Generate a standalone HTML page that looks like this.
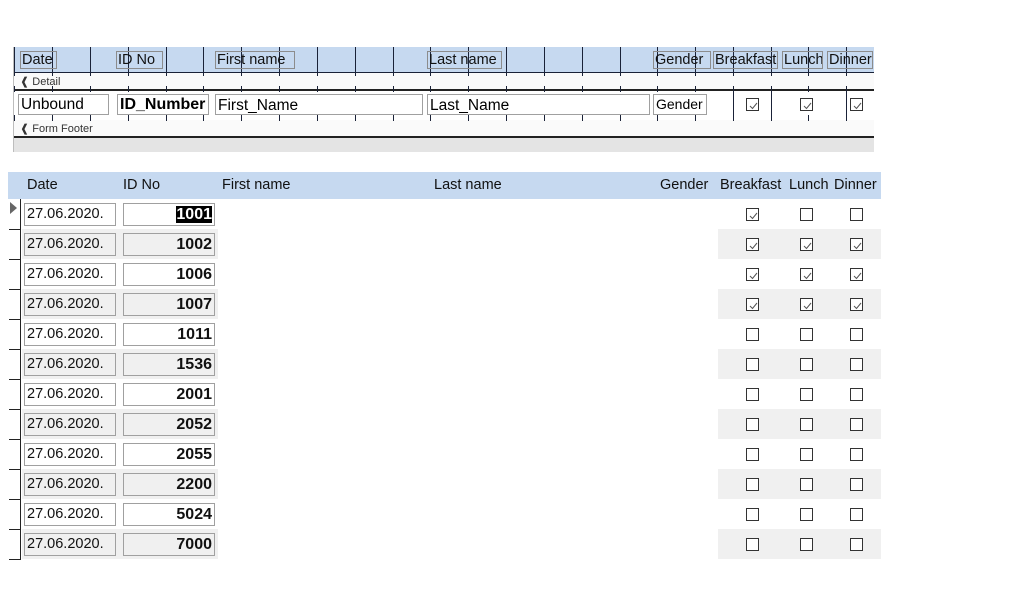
<!DOCTYPE html>
<html><head><meta charset="utf-8"><style>
body{margin:0;width:1016px;height:600px;background:#fff;position:relative;overflow:hidden;font-family:"Liberation Sans",Arial,sans-serif}
div{position:absolute;box-sizing:border-box}
.vl{width:1px;background:#1a2238}
.lbl{border:1px solid #8c8c8c;font-size:14.5px;line-height:17px;color:#111;white-space:nowrap;overflow:hidden;padding-left:1px}
.tb{border:1px solid #a0a0a0;background:#fff;font-size:15.5px;line-height:19px;padding-left:2px;white-space:nowrap;overflow:hidden}
.sec{font-size:11px;color:#333;left:20px}
.hd{font-size:14.5px;color:#111;top:177px}
.cb{width:13px;height:13px;border:1px solid #333;background:#fff}
.cb svg{position:absolute;left:1px;top:1px}
.d{left:24px;width:92px;height:23px;border:1px solid #a0a0a0;font-size:14.5px;line-height:20px;padding-left:2px;color:#111}
.n{left:123px;width:92px;height:23px;border:1px solid #a0a0a0;font-size:16px;font-weight:bold;line-height:21px;text-align:right;padding-right:2px;color:#111}
</style></head><body>
<div style="left:13px;top:47px;width:861px;height:105px;border-left:1px solid #bdbdbd;background:#fafafa"></div>
<div style="left:14px;top:47px;width:860px;height:26px;background:#c6d9f0"></div>
<div style="left:14px;top:72px;width:860px;height:1px;background:#1a2238"></div>
<div style="left:14px;top:89px;width:860px;height:2px;background:#222"></div>
<div style="left:14px;top:91px;width:860px;height:29px;background:#fff"></div>
<div style="left:14px;top:136px;width:860px;height:2px;background:#222"></div>
<div style="left:14px;top:138px;width:860px;height:14px;background:#e4e4e4"></div>
<div class="sec" style="top:75px">&#x2770; Detail</div>
<div class="sec" style="top:122px">&#x2770; Form Footer</div>
<div id="grid"></div>
<div class="lbl" style="left:20px;top:51px;width:37px;height:18px">Date</div>
<div class="lbl" style="left:116px;top:51px;width:47px;height:18px">ID No</div>
<div class="lbl" style="left:215px;top:51px;width:80px;height:18px">First name</div>
<div class="lbl" style="left:427px;top:51px;width:75px;height:18px">Last name</div>
<div class="lbl" style="left:653px;top:51px;width:58px;height:18px">Gender</div>
<div class="lbl" style="left:713px;top:51px;width:65px;height:18px">Breakfast</div>
<div class="lbl" style="left:782px;top:51px;width:41px;height:18px">Lunch</div>
<div class="lbl" style="left:827px;top:51px;width:46px;height:18px">Dinner</div>
<div class="tb" style="left:18px;top:94px;width:91px;height:21px">Unbound</div>
<div class="tb" style="left:117px;top:94px;width:92px;height:21px;font-weight:bold;font-size:16px">ID_Number</div>
<div class="tb" style="left:215px;top:94px;width:208px;height:21px;line-height:21px">First_Name</div>
<div class="tb" style="left:427px;top:94px;width:223px;height:21px;line-height:21px">Last_Name</div>
<div class="tb" style="left:653px;top:94px;width:54px;height:21px;font-size:14px">Gender</div>
<div style="left:8px;top:172px;width:873px;height:27px;background:#c6d9f0"></div>
<div class="hd" style="left:27px">Date</div>
<div class="hd" style="left:123px">ID No</div>
<div class="hd" style="left:222px">First name</div>
<div class="hd" style="left:434px">Last name</div>
<div class="hd" style="left:660px">Gender</div>
<div class="hd" style="left:720px">Breakfast</div>
<div class="hd" style="left:789px">Lunch</div>
<div class="hd" style="left:834px">Dinner</div>
<div style="left:20px;top:199px;width:1px;height:361px;background:#222"></div>
<div style="left:10px;top:202px;width:0;height:0;border-left:7px solid #666;border-top:6px solid transparent;border-bottom:6px solid transparent"></div>
<div id="rows"></div>
<script>
var g='';
[14,52,90,128,166,203,241,279,317,355,393,430,468,506,544,582,620,657,695,733,771,808,846].forEach(function(x){
g+='<div class="vl" style="left:'+x+'px;top:47px;height:29px"></div>';
g+='<div class="vl" style="left:'+x+'px;top:86px;height:6px"></div>';
g+='<div class="vl" style="left:'+x+'px;top:115px;height:6px"></div>';});
[733,771,846].forEach(function(x){g+='<div class="vl" style="left:'+x+'px;top:91px;height:29px"></div>';});
[746,800,850].forEach(function(x){g+='<div class="cb" style="left:'+x+'px;top:98px"><svg width="11" height="11"><path d="M2 6 L4.5 8.5 L9 3" stroke="#555" fill="none" stroke-width="1"/></svg></div>';});
document.getElementById('grid').innerHTML=g;
var ids=['1001','1002','1006','1007','1011','1536','2001','2052','2055','2200','5024','7000'];
var ck=[[1,0,0],[1,1,1],[1,1,1],[1,1,1]];
var s='';
ids.forEach(function(id,i){
var y=199+i*30,gr=i%2==1,bg=gr?'#f0f0f0':'#fff';
if(gr){s+='<div style="left:22px;top:'+y+'px;width:196px;height:30px;background:#f0f0f0"></div>';
s+='<div style="left:718px;top:'+y+'px;width:163px;height:30px;background:#f0f0f0"></div>';}
s+='<div style="left:9px;top:'+(y+30)+'px;width:12px;height:1px;background:#222"></div>';
s+='<div class="d" style="top:'+(y+4)+'px;background:'+bg+'">27.06.2020.</div>';
s+='<div class="n" style="top:'+(y+4)+'px;background:'+bg+'">'+(i==0?'<span style="background:#000;color:#fff">'+id+'</span>':id)+'</div>';
var c=ck[i]||[0,0,0];
[746,800,850].forEach(function(x,k){s+='<div class="cb" style="left:'+x+'px;top:'+(y+9)+'px">'+(c[k]?'<svg width="11" height="11"><path d="M2 6 L4.5 8.5 L9 3" stroke="#555" fill="none" stroke-width="1"/></svg>':'')+'</div>';});
});
document.getElementById('rows').innerHTML=s;
</script>
</body></html>
